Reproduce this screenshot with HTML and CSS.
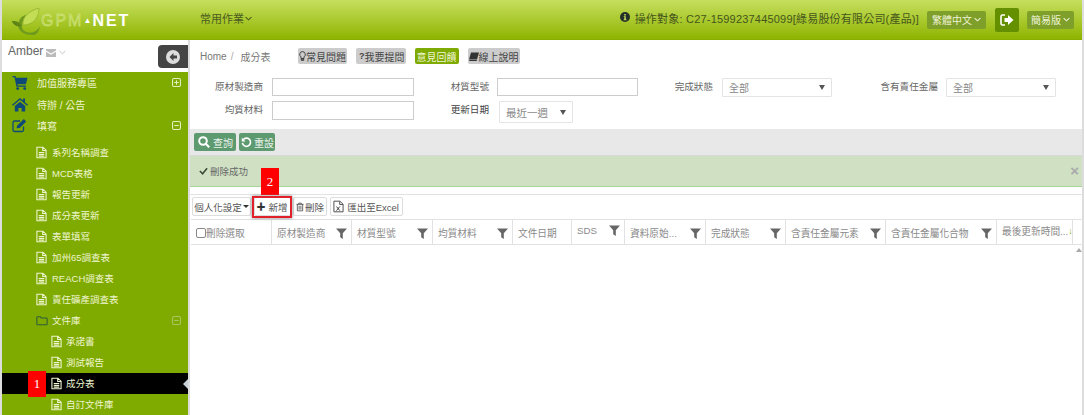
FILE: index.html
```html
<!DOCTYPE html>
<html lang="zh-Hant">
    <head>
        <meta charset="utf-8">
        <meta name="viewport" content="width=device-width, initial-scale=1.0">
        <title>成分表</title>
        <link rel="stylesheet" href="styles.css">
    </head>
    <body>
        <svg class="sprite" width="0" height="0">
            <defs>
                <symbol id="i-doc" viewBox="0 0 12 13"><path d="M1 .7h6.500L11 4v8.300H1zM7.300 1v3.300H11M3 6.500h6M3 8.500h6M3 10.500h6" fill="none" stroke="currentColor" stroke-width="1.200"/></symbol>
                <symbol id="i-cart" viewBox="0 0 16 16"><path d="M0 1h3.200l.5 2H16l-1.700 6.800H5.300l.3 1.400H14.500v1.400H4.200L2.100 2.400H0z"/><circle cx="5.500" cy="14.500" r="1.500"/><circle cx="13" cy="14.500" r="1.500"/></symbol>
                <symbol id="i-home" viewBox="0 0 16 14"><path d="M8 .5 0 7.300l.9 1L8 2.300l7.100 6 .9-1-3-2.500V1h-2v2.100zM2.800 8.600 8 4.200l5.200 4.400V14H9.600v-3.500H6.400V14H2.800z"/></symbol>
                <symbol id="i-edit" viewBox="0 0 16 14"><path d="M11.500 8v3.500a1.500 1.500 0 0 1-1.500 1.500H2.500A1.500 1.500 0 0 1 1 11.500V4a1.500 1.500 0 0 1 1.500-1.500H8" fill="none" stroke="currentColor" stroke-width="1.300"/><path d="M4.500 9.800 5.300 7l6.500-6.500 2.400 2.400-6.500 6.500z"/></symbol>
                <symbol id="i-folder" viewBox="0 0 14 12"><path d="M1 2.500A1 1 0 0 1 2 1.500h3l1 1.500h6a1 1 0 0 1 1 1v6a1 1 0 0 1-1 1H2a1 1 0 0 1-1-1z" fill="none" stroke="currentColor" stroke-width="1.200"/></symbol>
                <symbol id="i-plus-box" viewBox="0 0 10 10"><rect x=".6" y=".6" width="8.800" height="8.800" rx="1.500" fill="none" stroke="currentColor" stroke-width="1.200"/><path d="M2.500 5h5M5 2.500v5" stroke="currentColor" stroke-width="1.200"/></symbol>
                <symbol id="i-minus-box" viewBox="0 0 10 10"><rect x=".6" y=".6" width="8.800" height="8.800" rx="1.500" fill="none" stroke="currentColor" stroke-width="1.200"/><path d="M2.500 5h5" stroke="currentColor" stroke-width="1.200"/></symbol>
                <symbol id="i-filter" viewBox="0 0 11 11"><path d="M0 .5h11L6.800 5.300V11L4.200 9.300v-4z"/></symbol>
            </defs>
        </svg>
        <div class="page">
            <header class="topbar">
                <div class="logo">
                    <svg class="logo-leaf" viewBox="0 0 30 28"><path d="M16.700 6.700C11 8 8 12 8.300 18c.3 6 8 10 16.700 8.700 3-1 4.500-5 5-8.700-2 4-5 6.500-10 6.500-5 0-8-2.500-8-6.500 0-4 2-8 4.700-11.800z" fill="#6f9a1e"/><path d="M13 17C12 8 20 3 29 0c0 9-5 17-16 17z" fill="#c3dd55" stroke="#8fb02e" stroke-width=".7"/><path d="M1.700 13.300c4-.8 8 .9 10 5-4 1-8-.7-10-5z" fill="#5f8416"/></svg>
                    <span class="logo-gpm">GPM</span><span class="logo-tri">▲</span><span class="logo-net">NET</span>
                </div>
                <div class="top-menu">常用作業<svg class="chev" viewBox="0 0 8 5"><path d="M.7.8 4 4 7.300.8" fill="none" stroke="currentColor" stroke-width="1.200"/></svg></div>
                <div class="top-right">
                    <svg class="info-icon" viewBox="0 0 10 10"><circle cx="5" cy="5" r="5" fill="#24302a"/><path d="M4.200 2h1.600v1.400H4.200zM3.700 4.200h2.100v3.100h.6v.9H3.700v-.9h.6V5.100h-.6z" fill="#c2dc5c"/></svg>
                    <span class="target">操作對象: C27-1599237445099[綠易股份有限公司(產品)]</span>
                    <span class="top-btn lang-btn">繁體中文<svg class="chev" viewBox="0 0 8 5"><path d="M.7.8 4 4 7.300.8" fill="none" stroke="currentColor" stroke-width="1.200"/></svg></span>
                    <span class="logout-btn"><svg viewBox="0 0 14 12" width="14" height="12"><path d="M5 1H2.500A1.500 1.500 0 0 0 1 2.500v7A1.500 1.500 0 0 0 2.500 11H5" fill="none" stroke="#fff" stroke-width="1.600"/><path d="M4.500 4H8V1l5.500 5L8 11V8H4.500z" fill="#fff"/></svg></span>
                    <span class="top-btn simple-btn">簡易版<svg class="chev" viewBox="0 0 8 5"><path d="M.7.8 4 4 7.300.8" fill="none" stroke="currentColor" stroke-width="1.200"/></svg></span>
                </div>
            </header>
            <div class="content">
                <aside class="sidebar">
                    <div class="user-box">
                        <span class="user-name">Amber</span>
                        <svg class="mail" viewBox="0 0 10 8"><path d="M0 0h10v1.500L5 4.500 0 1.500zM0 2.700l5 3 5-3V8H0z"/></svg>
                        <svg class="user-chev" viewBox="0 0 8 5"><path d="M.7.8 4 4 7.300.8" fill="none" stroke="currentColor" stroke-width="1"/></svg>
                        <span class="collapse-btn"><svg viewBox="0 0 14 14" width="14" height="14"><circle cx="7" cy="7" r="7" fill="#ddd"/><path d="M7.500 3 3.500 7l4 4V8.500h3.500v-3H7.500z" fill="#444"/></svg></span>
                    </div>
                    <ul class="nav">
                        <li class="nav-item"><svg class="nav-icon"><use href="#i-cart"/></svg>加值服務專區<svg class="box-icon"><use href="#i-plus-box"/></svg></li>
                        <li class="nav-item"><svg class="nav-icon"><use href="#i-home"/></svg>待辦 / 公告</li>
                        <li class="nav-item"><svg class="nav-icon"><use href="#i-edit"/></svg>填寫<svg class="box-icon"><use href="#i-minus-box"/></svg></li>
                    </ul>
                    <ul class="subnav">
                        <li class="sub-item"><svg class="doc-icon"><use href="#i-doc"/></svg>系列名稱調查</li>
                        <li class="sub-item"><svg class="doc-icon"><use href="#i-doc"/></svg>MCD表格</li>
                        <li class="sub-item"><svg class="doc-icon"><use href="#i-doc"/></svg>報告更新</li>
                        <li class="sub-item"><svg class="doc-icon"><use href="#i-doc"/></svg>成分表更新</li>
                        <li class="sub-item"><svg class="doc-icon"><use href="#i-doc"/></svg>表單填寫</li>
                        <li class="sub-item"><svg class="doc-icon"><use href="#i-doc"/></svg>加州65調查表</li>
                        <li class="sub-item"><svg class="doc-icon"><use href="#i-doc"/></svg>REACH調查表</li>
                        <li class="sub-item"><svg class="doc-icon"><use href="#i-doc"/></svg>責任礦產調查表</li>
                        <li class="sub-item"><svg class="doc-icon folder-icon"><use href="#i-folder"/></svg>文件庫<svg class="box-icon box-dim"><use href="#i-minus-box"/></svg></li>
                        <li class="sub-item deep"><svg class="doc-icon"><use href="#i-doc"/></svg>承諾書</li>
                        <li class="sub-item deep"><svg class="doc-icon"><use href="#i-doc"/></svg>測試報告</li>
                        <li class="sub-item deep active"><svg class="doc-icon"><use href="#i-doc"/></svg>成分表</li>
                        <li class="sub-item deep"><svg class="doc-icon"><use href="#i-doc"/></svg>自訂文件庫</li>
                    </ul>
                </aside>
                <main class="main">
                    <div class="crumb-row">
                        <div class="crumbs"><span>Home</span><span class="crumb-sep">/</span><span>成分表</span></div>
                        <div class="help-btns">
                            <span class="help-btn">
                                <svg class="help-icon" viewBox="0 0 7 10"><path d="M3.500.6a2.900 2.900 0 0 0-1.500 5.300V7.500h3V5.900A2.900 2.900 0 0 0 3.500.6zM2.200 8.300h2.600v1H2.200z" fill="none" stroke="#333" stroke-width=".9"/></svg>常見問題
                            </span>
                            <span class="help-btn"><b>?</b>我要提問</span>
                            <span class="help-btn help-green">意見回饋</span>
                            <span class="help-btn">
                                <svg class="help-icon book" viewBox="0 0 10 9"><path d="M2 .5h8L8 7.500H0z" fill="#333"/><path d="M.3 8.500h7.500" stroke="#333"/></svg>線上說明
                            </span>
                        </div>
                    </div>
                    <form class="filters">
                        <label class="f-label">原材製造商</label><input class="f-input" type="text">
                        <label class="f-label">材質型號</label><input class="f-input" type="text">
                        <label class="f-label">完成狀態</label><div class="f-select"><span>全部</span><i class="caret"></i></div>
                        <label class="f-label">含有責任金屬</label><div class="f-select"><span>全部</span><i class="caret"></i></div>
                        <label class="f-label">均質材料</label><input class="f-input f-tall" type="text">
                        <label class="f-label f-dark">更新日期</label><div class="f-select f-date"><span>最近一週</span><i class="caret"></i></div>
                    </form>
                    <div class="query-bar">
                        <span class="query-btn"><svg viewBox="0 0 12 12" width="12" height="12"><circle cx="5" cy="5" r="3.800" fill="none" stroke="#fff" stroke-width="2"/><path d="M8 8l3.200 3.200" stroke="#fff" stroke-width="2.200"/></svg>查詢</span>
                        <span class="query-btn query-tight"><svg viewBox="0 0 12 12" width="11" height="11"><path d="M2.500 2.800A4.500 4.500 0 1 1 1.500 6.500" fill="none" stroke="#fff" stroke-width="1.800"/><path d="M.8 .8v4.200H5z" fill="#fff"/></svg>重設</span>
                    </div>
                    <div class="alert"><svg viewBox="0 0 10 8" width="9" height="8"><path d="M1 4l3 3 5-6" fill="none" stroke="#3c4a38" stroke-width="1.800"/></svg><span>刪除成功</span><span class="alert-close">×</span></div>
                    <div class="grid-tools">
                        <span class="tool-btn tool-settings">個人化設定<i class="tool-caret"></i></span>
                        <span class="tool-btn tool-add"><b class="plus">✚</b>新增</span>
                        <span class="tool-btn tool-delete"><svg viewBox="0 0 9 10" width="8" height="10"><path d="M.5 2h8M3 2V.7h3V2M1.500 2v7.300h6V2M3.500 3.500v4.500M5.500 3.500v4.500" fill="none" stroke="#444" stroke-width=".9"/></svg>刪除</span>
                        <span class="tool-btn tool-excel"><svg viewBox="0 0 12 13" width="11" height="13"><path d="M1 .7h6.500L11 4v8.300H1zM7.300 1v3.300H11" fill="none" stroke="#444"/><path d="M3.800 6.500l3.600 4.500M7.400 6.500L3.800 11" stroke="#333"/></svg>匯出至Excel</span>
                    </div>
                    <div class="table-head">
                        <div class="th th-check"><i class="check-box"></i>刪除選取</div>
                        <div class="th">原材製造商<svg class="filter"><use href="#i-filter"/></svg></div>
                        <div class="th">材質型號<svg class="filter"><use href="#i-filter"/></svg></div>
                        <div class="th">均質材料<svg class="filter"><use href="#i-filter"/></svg></div>
                        <div class="th">文件日期</div>
                        <div class="th th-up">SDS<svg class="filter"><use href="#i-filter"/></svg></div>
                        <div class="th">資料原始...<svg class="filter"><use href="#i-filter"/></svg></div>
                        <div class="th">完成狀態<svg class="filter"><use href="#i-filter"/></svg></div>
                        <div class="th">含責任金屬元素<svg class="filter"><use href="#i-filter"/></svg></div>
                        <div class="th">含責任金屬化合物<svg class="filter"><use href="#i-filter"/></svg></div>
                        <div class="th th-up">最後更新時間...<span class="sort-arrow">↓</span></div>
                        <div class="th th-end"></div>
                    </div>
                    <div class="table-body"><i class="scroll-up"></i></div>
                </main>
            </div>
            <span class="mark mark-one">1</span>
            <span class="mark mark-two">2</span>
            <span class="mark-frame"></span>
        </div>
    </body>
</html>
```

FILE: styles.css
```css
*{
    margin: 0;
    padding: 0;
    box-sizing: border-box;
}
body{
    font-family: "Liberation Sans", "Noto Sans CJK TC", sans-serif;
    background-color: #fff;
    color: #666;
}
ul{
    list-style: none;
}
.sprite{
    position: absolute;
}
.page{
    position: relative;
    width: 1084px;
    height: 415px;
    overflow: hidden;
    border-left: 2px solid #ddd;
    border-right: 2px solid #ddd;
}

/* top bar */
.topbar{
    height: 40px;
    display: flex;
    align-items: center;
    background: linear-gradient(#c6df5e, #8fb401);
    border-bottom: 1px solid #89ad00;
}
.logo{
    width: 198px;
    height: 39px;
    display: flex;
    align-items: center;
    padding-left: 8px;
    padding-top: 2px;
    font-size: 16px;
    letter-spacing: 2px;
}
.logo-leaf{
    width: 30px;
    height: 28px;
    margin-right: 1px;
    margin-top: 3px;
}
.logo-gpm{
    color: #b9d455;
    -webkit-text-stroke: .4px #dbe98f;
}
.logo-tri{
    font-size: 8px;
    color: #fff;
    margin: 0 1px 0 0;
    letter-spacing: 0;
}
.logo-net{
    color: #fff;
    font-weight: bold;
}
.top-menu{
    font-size: 11px;
    color: #4a5a20;
    display: flex;
    align-items: center;
    gap: 1px;
    margin-top: -3px;
}
.chev{
    width: 7px;
    height: 5px;
}
.top-right{
    margin-left: auto;
    display: flex;
    align-items: center;
    padding-right: 8px;
}
.info-icon{
    width: 10px;
    height: 10px;
    margin-top: -6px;
}
.target{
    font-size: 11px;
    letter-spacing: .2px;
    color: #45551c;
    margin-left: 5px;
    margin-right: 8px;
    margin-top: -4px;
    white-space: nowrap;
}
.top-btn{
    height: 18px;
    display: flex;
    align-items: center;
    justify-content: center;
    gap: 2px;
    border-radius: 2px;
    background-color: #7f9f2b;
    color: #eef3d5;
    font-size: 10px;
}
.lang-btn{
    width: 59px;
}
.simple-btn{
    width: 47px;
}
.logout-btn{
    width: 24px;
    height: 24px;
    margin: 0 8px 0 9px;
    display: flex;
    align-items: center;
    justify-content: center;
    border-radius: 2px;
    background-color: #649000;
}

/* layout under the bar */
.content{
    display: flex;
    height: 375px;
}
.sidebar{
    width: 186px;
    flex-shrink: 0;
    background-color: #7faa00;
}
.user-box{
    height: 32px;
    background-color: #fff;
    display: flex;
    align-items: flex-start;
    padding: 4px 0 0 6px;
    position: relative;
}
.user-name{
    font-size: 12px;
    color: #666;
}
.mail{
    width: 10px;
    height: 8px;
    fill: #bbb;
    margin: 5px 0 0 3px;
}
.user-chev{
    width: 7px;
    height: 5px;
    color: #bbb;
    margin: 6px 0 0 3px;
}
.collapse-btn{
    position: absolute;
    right: 0;
    top: 5px;
    width: 30px;
    height: 23px;
    display: flex;
    align-items: center;
    justify-content: center;
    border-radius: 4px 0 0 4px;
    background-color: #444;
}

/* side menu */
.nav-item{
    height: 21.500px;
    display: flex;
    align-items: center;
    font-size: 10px;
    color: #eef5d0;
    padding-left: 35px;
    position: relative;
}
.nav-icon{
    position: absolute;
    left: 10px;
    top: 3px;
    width: 16px;
    height: 15px;
    fill: #0e4a78;
    color: #0e4a78;
}
.box-icon{
    position: absolute;
    right: 7px;
    top: 6px;
    width: 9px;
    height: 9px;
    color: #e6f0bf;
}
.box-dim{
    color: #a9c75c;
}
.subnav{
    padding-top: 5px;
}
.sub-item{
    height: 21px;
    display: flex;
    align-items: center;
    font-size: 9.500px;
    letter-spacing: 0;
    color: #eef5d0;
    padding-left: 50px;
    position: relative;
}
.doc-icon{
    position: absolute;
    left: 34px;
    top: 4px;
    width: 11px;
    height: 13px;
    color: #eef5d0;
}
.folder-icon{
    color: #2f5c3a;
    width: 12px;
}
.deep{
    padding-left: 64px;
}
.deep .doc-icon{
    left: 49px;
}
.active{
    background-color: #000;
}
.active::after{
    content: "";
    position: absolute;
    right: 0;
    top: 6px;
    border-style: solid;
    border-width: 5px 5px 5px 0;
    border-color: transparent #c6d2d8 transparent transparent;
}

/* main area */
.main{
    flex: 1;
    min-width: 0;
    border-left: 2px solid #ddd;
}
.crumb-row{
    height: 38px;
    display: flex;
    align-items: flex-start;
    padding-top: 8px;
}
.crumbs{
    width: 108px;
    padding-left: 10px;
    padding-top: 1px;
    font-size: 10px;
    color: #777;
    display: flex;
    align-items: center;
}
.crumb-sep{
    margin: 0 7px 0 4px;
    color: #aaa;
}
.help-btns{
    display: flex;
    gap: 9px;
}
.help-btn{
    height: 16px;
    display: flex;
    align-items: center;
    padding: 0 1px;
    border-radius: 2px;
    background-color: #ccc;
    font-size: 10px;
    color: #444;
}
.help-btn b{
    font-size: 9px;
    margin-left: 2px;
}
.help-green{
    padding: 0 2px;
    background-color: #7faa00;
    color: #f0f5d8;
}
.help-icon{
    width: 7px;
    height: 10px;
}
.help-icon.book{
    width: 10px;
    height: 9px;
    margin-right: 0;
}

/* search form, columns end where the reference's labels and inputs end */
.filters{
    height: 51px;
    display: grid;
    grid-template-columns: 73px 151px 75px 149px 75px 119px 106px 118px;
    grid-auto-rows: 23px;
    align-items: start;
}
.f-label{
    font-size: 9.600px;
    color: #666;
    text-align: right;
    white-space: nowrap;
    margin-top: 1px;
}
.f-dark{
    color: #444;
}
.f-input{
    height: 18px;
    width: 142px;
    margin-left: 9px;
    border: 1px solid #ccc;
    background-color: #fff;
}
.f-tall{
    height: 19px;
}
.filters .f-input:nth-of-type(2){
    width: 141px;
    margin-left: 8px;
}
.f-select{
    width: 110px;
    height: 19px;
    margin-left: 9px;
    border: 1px solid #e4e4e4;
    border-radius: 1px;
    display: flex;
    align-items: center;
    justify-content: space-between;
    padding: 0 6px;
    font-size: 10px;
    color: #888;
}
.filters .f-select:nth-of-type(2){
    margin-left: 8px;
}
.filters .f-date{
    width: 74px;
    height: 22px;
    margin-left: 10px;
    font-size: 10.500px;
}
.caret{
    border-style: solid;
    border-width: 5px 3.500px 0 3.500px;
    border-color: #555 transparent transparent transparent;
}
.query-bar{
    height: 27px;
    display: flex;
    align-items: center;
    gap: 3px;
    padding-left: 4px;
    background-color: #e8e8e8;
    border-bottom: 1px solid #d8d8d8;
}
.query-btn{
    height: 18px;
    display: flex;
    align-items: center;
    gap: 3px;
    padding: 0 3px 0 4px;
    border-radius: 2px;
    background-color: #5e9a6f;
    color: #eaf2ec;
    font-size: 10px;
}
.query-tight{
    gap: 2px;
    padding: 0 1px 0 2px;
}
.alert{
    height: 31px;
    display: flex;
    align-items: center;
    gap: 2px;
    padding: 0 3px 1px 9px;
    font-size: 9.500px;
    color: #666;
    background-color: #cfe0c3;
    border-bottom: 1px solid #a9d59a;
}
.alert-close{
    margin-left: auto;
    font-size: 15px;
    font-weight: bold;
    color: #aaa;
}
.grid-tools{
    height: 32px;
    padding: 10px 0 0 2px;
    display: flex;
    gap: 2.500px;
    align-items: flex-start;
    position: relative;
}
.grid-tools::before{
    content: "";
    position: absolute;
    left: 0;
    right: 0;
    top: 7px;
    border-top: 1px solid #e2e2e2;
}
.tool-btn{
    height: 19px;
    display: flex;
    align-items: center;
    justify-content: center;
    gap: 1px;
    border: 1px solid #ddd;
    border-radius: 2px;
    font-size: 9.500px;
    color: #555;
    white-space: nowrap;
}
.tool-settings{
    width: 59px;
}
.tool-add{
    width: 37px;
    gap: 3px;
}
.tool-delete{
    width: 34px;
}
.tool-excel{
    width: 73px;
    gap: 3px;
}
.tool-caret{
    border-style: solid;
    border-width: 3px 3px 0 3px;
    border-color: #333 transparent transparent transparent;
}
.plus{
    color: #333;
    font-size: 9px;
}

/* empty table, header only */
.table-head{
    height: 26px;
    display: grid;
    grid-template-columns: 81px 80px 81px 80px 59px 53px 81px 80px 100px 111px 76px 9px;
    margin-left: 1px;
    border-top: 1px solid #e2e2e2;
    border-bottom: 1px solid #e2e2e2;
}
.th{
    display: flex;
    align-items: center;
    padding: 2px 4px 0 5px;
    font-size: 9.700px;
    color: #8a8a8a;
    border-right: 1px solid #e2e2e2;
    white-space: nowrap;
    overflow: hidden;
}
.th-up{
    padding-top: 0;
    padding-bottom: 3px;
}
.th-end{
    border-right: none;
}
.check-box{
    width: 10px;
    height: 10px;
    border: 1px solid #888;
    border-radius: 2px;
}
.filter{
    width: 11px;
    height: 11px;
    margin-left: auto;
    fill: #666;
}
.sort-arrow{
    margin-left: auto;
    margin-right: -4px;
    color: #7faa00;
    font-size: 9px;
}
.table-body{
    position: relative;
    height: 100px;
}
.scroll-up{
    position: absolute;
    right: 0;
    top: 3px;
    border-style: solid;
    border-width: 0 3px 4px 3px;
    border-color: transparent transparent #aaa transparent;
}

/* red notes that lie over the page */
.mark{
    position: absolute;
    width: 18px;
    background-color: #f00;
    color: #fff;
    font-family: "Liberation Serif", serif;
    font-size: 13px;
    display: flex;
    align-items: center;
    justify-content: center;
}
.mark-one{
    left: 26px;
    top: 371px;
    height: 26px;
}
.mark-two{
    left: 259px;
    top: 168px;
    height: 27px;
}
.mark-frame{
    position: absolute;
    left: 250px;
    top: 196px;
    width: 40px;
    height: 22px;
    border: 2px solid #e2202c;
    box-shadow: 0 0 3px #777;
}
```
